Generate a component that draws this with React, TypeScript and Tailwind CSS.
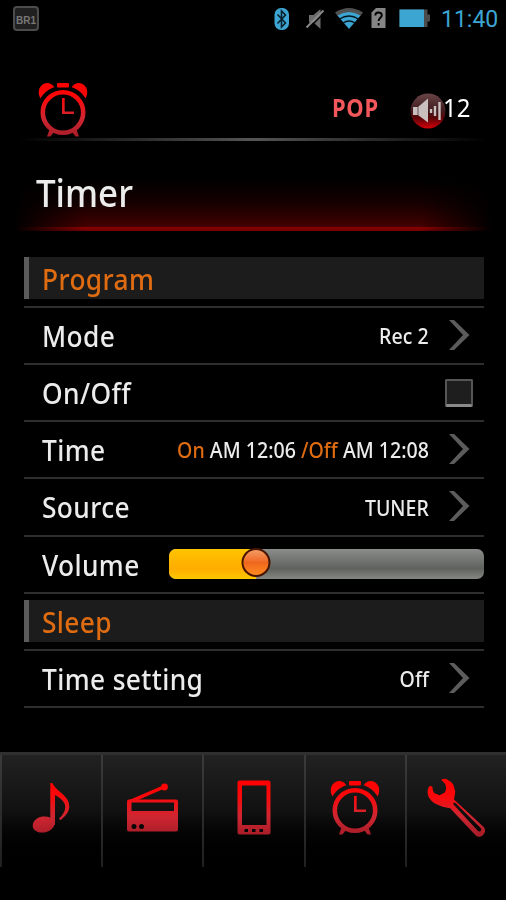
import type { ReactNode } from "react";

export default function App() {
  return (
    <div className="flex h-[900px] w-[506px] flex-col overflow-hidden bg-black font-['Noto_Sans','Open_Sans',sans-serif] text-[#ececec]">
      <StatusBar />
      <Header />
      <TitleBar title="Timer" />

      <main className="ml-6 mt-[26px] w-[460px]">
        <SectionHeader title="Program" />
        <div className="mt-[7px]">
          <Row label="Mode">
            <Value>Rec 2</Value>
            <Chevron />
          </Row>
          <Row label="On/Off">
            <span className="mr-[11px] mt-[2px] h-7 w-7 rounded-[2px] border-2 border-b-[3px] border-[#555] border-b-[#8a8a8a] bg-[#1e1e1e]" />
          </Row>
          <Row label="Time">
            <Value>
              <span className="text-[#e06c12]">On</span> AM 12:06 <span className="text-[#e06c12]">/Off</span> AM 12:08
            </Value>
            <Chevron />
          </Row>
          <Row label="Source" tall>
            <Value>TUNER</Value>
            <Chevron />
          </Row>
          <Row label="Volume">
            <VolumeSlider value={27.5} />
          </Row>
          <div className="h-[2px] bg-[#2e2e2e]" />
        </div>

        <div className="mt-[6px]">
          <SectionHeader title="Sleep" />
        </div>
        <div className="mt-[7px] border-b-2 border-[#2e2e2e]">
          <Row label="Time setting">
            <Value>Off</Value>
            <Chevron />
          </Row>
        </div>
      </main>

      <BottomNav />
    </div>
  );
}

function StatusBar() {
  return (
    <div className="flex h-[38px] flex-none items-center pl-[13px] pr-[8px]">
      <div className="-mt-[2px] flex h-[25px] w-[26px] items-end justify-center rounded-[4px] border-2 border-[#4c4c4c] bg-[#202020] pb-[2px] font-['Liberation_Sans',sans-serif] text-[10px] font-bold leading-[13px] text-[#777]">
        BR1
      </div>
      <svg className="ml-auto" width="160" height="38" viewBox="272 0 160 38">
        {/* bluetooth */}
        <rect x="274.5" y="8" width="14.5" height="22" rx="6.5" fill="#3da5d2" />
        <path d="M277.5 14.5l8 8.5-4 4V11l4 4-8 8.5" fill="none" stroke="#06202c" strokeWidth="1.6" />
        {/* muted speaker */}
        <path d="M309 15h4.500l7-6v20l-7-6.500H309z" fill="#6e6e6e" />
        <path d="M308 29l17-17" stroke="#000" strokeWidth="1.500" />
        <path d="M306.500 27.500l17-17" stroke="#8a8a8a" strokeWidth="1.900" />
        {/* wifi */}
        <path d="M335 12.500q14-9 28 0l-3 4q-11-7-22 0z" fill="#505050" />
        <path d="M337.500 15.500q11.500-7 23 0L349 29z" fill="#3da5d2" />
        <path d="M339.500 19q9.500-6 19 0M343 23q6-4 12 0" fill="none" stroke="#03151d" strokeWidth="1.300" />
        {/* sim */}
        <path d="M376 8h9.500v20h-14V12.500z" fill="#858585" />
        <path d="M375.300 15.500c0-4 6.500-4 6.500-.3 0 2.600-3.200 2.500-3.200 5.800M378.600 23v2.500" fill="none" stroke="#000" strokeWidth="1.900" />
        {/* battery */}
        <path d="M399.500 9.500h28v5h2.500v7h-2.500V27h-28z" fill="#4b4b4b" />
        <path d="M399.500 9.500H424V27h-24.500z" fill="#3da5d2" />
      </svg>
      <span className="ml-[9px] w-[57px] whitespace-nowrap font-[Roboto,sans-serif] text-[23px] leading-none text-[#3da5d2]">11:40</span>
    </div>
  );
}

function Header() {
  return (
    <header className="h-[103px] flex-none">
      <div className="flex h-[100px] items-end pl-[33px] pr-[34px]">
        <svg className="-mb-[2px]" width="60" height="60" viewBox="0 0 60 60">
          <IconGradient id="head" />
          <AlarmShape paint="url(#head)" />
        </svg>
        <span className="mb-[13px] ml-auto block h-[36px] w-[49px] origin-left scale-x-[0.88] text-[25px] font-bold leading-[36px] tracking-[0.8px] text-[#f4585c]">POP</span>
        <svg className="mb-[9px] ml-[29px]" width="36" height="36" viewBox="0 0 36 36">
          <defs>
            <linearGradient id="ball" x1="0" y1="0" x2="0" y2="1">
              <stop offset="0" stopColor="#684548" />
              <stop offset=".5" stopColor="#40191b" />
              <stop offset=".7" stopColor="#5c0508" />
              <stop offset="1" stopColor="#d40009" />
            </linearGradient>
          </defs>
          <circle cx="18" cy="18" r="17.500" fill="url(#ball)" />
          <path d="M3 14h5l10-8.500v24L8 22H3z" fill="#c9bfbf" />
          <path d="M8 14v8" stroke="#6b5355" strokeWidth="1" />
          <path d="M21 16v4M25 13v10M29.500 9v18" stroke="#c9bfbf" strokeWidth="2.400" />
        </svg>
        <span className="mb-[13px] -ml-[3px] block h-[36px] w-[29px] origin-left scale-x-[0.96] text-[25px] leading-[36px] text-white">12</span>
      </div>
      <div className="mx-[18px] h-[3px] bg-linear-to-r from-transparent via-[#555] to-transparent" />
    </header>
  );
}

function TitleBar({ title }: { title: string }) {
  return (
    <div className="relative h-[90px] flex-none">
      <div className="absolute inset-x-[14px] inset-y-0 mask-x-from-85% mask-x-to-100%">
        <div className="h-[86px] bg-linear-to-b from-transparent from-45% via-[#160000] via-72% to-[#440000]" />
      </div>
      <div className="absolute inset-x-[14px] bottom-0 h-[4px] bg-linear-to-b from-[#8e0000] to-[#700000] mask-x-from-85% mask-x-to-100%" />
      <h1 className="relative w-fit origin-left scale-x-[0.92] pl-[39px] pt-[25px] text-[38px] font-medium leading-[52px]">{title}</h1>
    </div>
  );
}

function SectionHeader({ title }: { title: string }) {
  return (
    <div className="flex h-[42px] items-center border-l-[5px] border-[#5b5b5b] bg-[#1c1c1c] pl-[13px]">
      <Label className="text-[#e06c12]">{title}</Label>
    </div>
  );
}

function Label({ children, className = "" }: { children: ReactNode; className?: string }) {
  return (
    <span className={`origin-left scale-x-[0.94] whitespace-nowrap pt-[1px] text-[28px] font-medium leading-none tracking-[0.4px] ${className}`}>
      {children}
    </span>
  );
}

function Row({ label, tall, children }: { label: string; tall?: boolean; children: ReactNode }) {
  return (
    <div className={`flex items-center border-t-2 border-[#2e2e2e] pb-[2px] pl-[18px] ${tall ? "h-[58px]" : "h-[57px]"}`}>
      <Label className="mt-[1px]">{label}</Label>
      <div className="ml-auto flex items-center">{children}</div>
    </div>
  );
}

function Value({ children }: { children: ReactNode }) {
  return (
    <span className="-mr-[1px] origin-right scale-x-[0.89] whitespace-nowrap pt-[1px] text-[22px] font-medium leading-none">{children}</span>
  );
}

function Chevron() {
  return (
    <svg className="ml-[20px] mr-[14px]" width="22" height="32" viewBox="0 0 22 32">
      <path d="M1 1h5l15.500 15L6 31H1l14-15z" fill="#5c5c5c" />
    </svg>
  );
}

function VolumeSlider({ value }: { value: number }) {
  return (
    <div className="relative h-[30px] w-[315px]">
      <div className="h-full overflow-hidden rounded-[7px] bg-linear-to-b from-[#8b8d8b] via-[#60625e] via-65% to-[#858783]">
        <div
          className="h-full bg-linear-to-b from-[#ffc400] via-[#ffac00] via-65% to-[#ffc800]"
          style={{ width: `${value}%` }}
        />
      </div>
      <div
        className="absolute -top-[1px] h-[29px] w-[29px] -translate-x-1/2 rounded-full border-[2.500px] border-[#471400] bg-linear-to-b from-[#f49a62] via-[#ef671d] to-[#ff8b20]"
        style={{ left: `${value}%` }}
      />
    </div>
  );
}

function IconGradient({ id }: { id: string }) {
  return (
    <defs>
      <linearGradient id={id} gradientUnits="userSpaceOnUse" x1="0" y1="3" x2="0" y2="57">
        <stop offset="0" stopColor="#ff0000" />
        <stop offset=".3" stopColor="#f80a0c" />
        <stop offset=".65" stopColor="#cf2631" />
        <stop offset="1" stopColor="#a81d28" />
      </linearGradient>
    </defs>
  );
}

function AlarmShape({ paint }: { paint: string }) {
  return (
    <g fill={paint}>
      <path d="M7.500 18.500C3.500 12 6.500 3.500 14 3c3.200 0 6 1.700 7.300 4.200C15.500 9 10.500 13 7.500 18.500z" />
      <path d="M52.500 18.500C56.500 12 53.500 3.500 46 3c-3.200 0-6 1.700-7.300 4.200C44.500 9 49.500 13 52.500 18.500z" />
      <rect x="24" y="3" width="12" height="4.500" rx="1" />
      <circle cx="30" cy="32.500" r="20.200" fill="none" stroke={paint} strokeWidth="4.600" />
      <path d="M29 18h2.700v13.500H41V34H29zM16.500 49.500l4 3-3 4h-3.500zM43.500 49.500l-4 3 3 4H46z" />
    </g>
  );
}

const tabs: { id: string; shape: ReactNode }[] = [
  {
    id: "music",
    shape: (
      <>
        <ellipse cx="21.500" cy="46.500" rx="11" ry="8" transform="rotate(-10 21.500 46.500)" />
        <path d="M28.300 5h2c4 9 17 12 17 23.500 0 5.500-4 9.500-8.500 13.500l-2-1c4-4 6.500-8 6.500-12 0-5.500-5.500-9.500-10.300-12V47h-4.700z" />
      </>
    ),
  },
  {
    id: "radio",
    shape: (
      <>
        <path
          fillRule="evenodd"
          d="M6 21.500h47q2 0 2 2v28q0 2-2 2H6q-2 0-2-2v-28q0-2 2-2zM8.500 24.500V33h42.500v-8.500zM8.500 48.500a2.500 2.500 0 1 0 5 0 2.500 2.500 0 1 0-5 0zM16 48.500a2.500 2.500 0 1 0 5 0 2.500 2.500 0 1 0-5 0z"
        />
        <path d="M5 22.500L40 7.500l1.500 3L14 22.500z" />
        <circle cx="41.500" cy="9" r="3.400" />
      </>
    ),
  },
  {
    id: "phone",
    shape: (
      <path
        fillRule="evenodd"
        d="M15.500 2.500h29q2 0 2 2v50q0 2-2 2h-29q-2 0-2-2v-50q0-2 2-2zM18 7.500V47h24.500V7.500zM20.500 51v3h3.500v-3zM28 51v3h3.500v-3zM35.500 51v3H39v-3z"
      />
    ),
  },
  { id: "timer", shape: null },
  {
    id: "settings",
    shape: (
      <path
        fillRule="evenodd"
        transform="translate(1 0)"
        d="M14.800 1.300Q17.500 0 19.800 1.300 24.500 3.500 26.500 7l1.800 6.700L27 21.500 57 49.300C60.500 54 54.500 61 49.200 58L23.200 30.300C19 29.500 16.500 29.200 13.200 27.700 9 26 5.500 24.800 3.200 21.300 1 18.500.2 15.500.8 12 1.200 9.500 2 8.500 3.200 7.700L5.500 8.700C5.500 11 6 13.500 7.500 15.300L12.500 17.300 17.500 14.700C19.200 12.500 19.500 10.500 18.800 8 18.300 5.500 17 4 14.800 2.700zM26.500 26.500L51 53c2.500 1.200 4-.5 2.800-2.800L28.500 25c-1.500-1-2.800.2-2 1.500z"
      />
    ),
  },
];

function BottomNav() {
  return (
    <nav className="mt-[44px] grid h-[115px] flex-none grid-cols-5 border-t-[3px] border-[#303030] bg-linear-to-b from-[#222] via-[#111] to-black">
      {tabs.map((tab) => (
        <button key={tab.id} className="flex justify-center pt-[23px]">
          <span className="-mt-[23px] h-[112px] w-[2px] flex-none bg-linear-to-b from-[#3b3b3b] to-[#202020]" />
          <svg className="mx-auto flex-none" width="60" height="60" viewBox="0 0 60 60" fill={`url(#${tab.id})`}>
            <IconGradient id={tab.id} />
            {tab.shape ?? <AlarmShape paint={`url(#${tab.id})`} />}
          </svg>
        </button>
      ))}
    </nav>
  );
}
